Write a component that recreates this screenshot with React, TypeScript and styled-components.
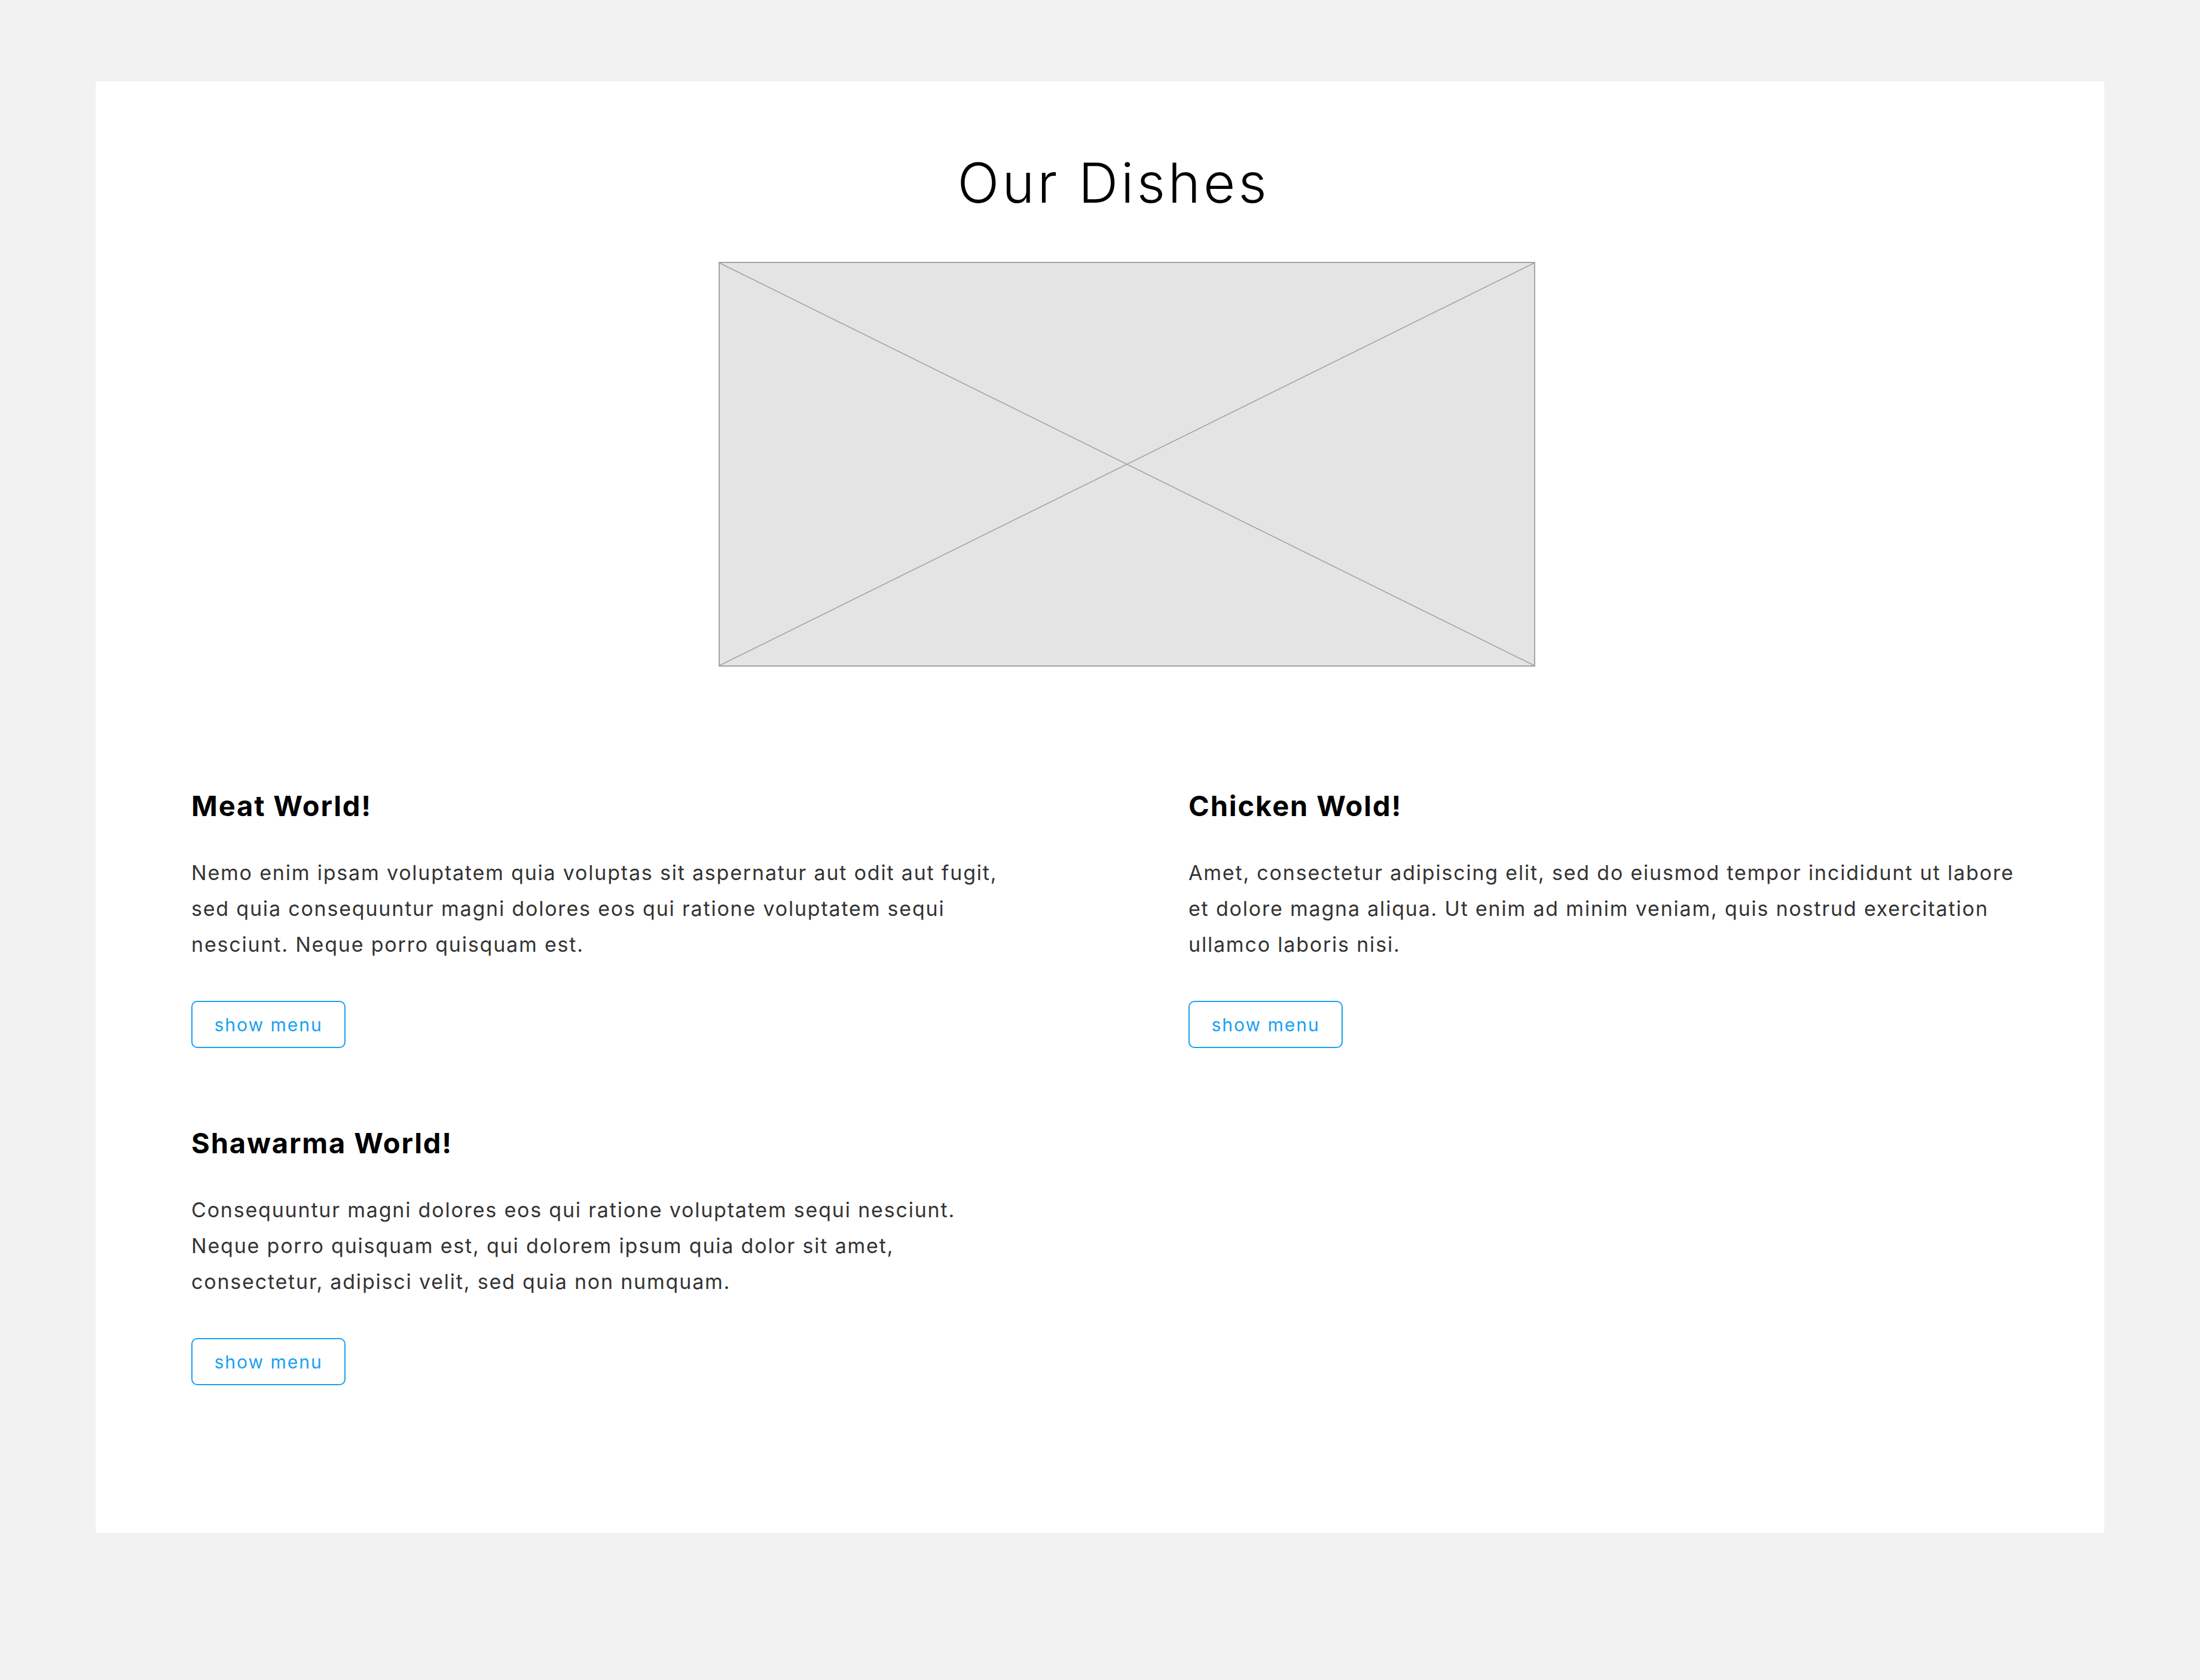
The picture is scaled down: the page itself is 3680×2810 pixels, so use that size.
import React from "react";
import styled, { createGlobalStyle } from "styled-components";

const GlobalStyle = createGlobalStyle`
  html, body {
    margin: 0;
    padding: 0;
    background: #f2f2f2;
  }
  body {
    font-family: "Inter", "Open Sans", sans-serif;
  }
`;

const Page = styled.div`
  width: 3680px;
  min-height: 2810px;
  padding: 136px 160px 242px;
  box-sizing: border-box;
  background: #f2f2f2;
`;

const Card = styled.section`
  width: 3360px;
  background: #ffffff;
  padding: 115px 160px 247px;
  box-sizing: border-box;
  display: flex;
  flex-direction: column;
`;

const Title = styled.h1`
  margin: 0;
  padding-left: 45px;
  font-family: "Inter", sans-serif;
  font-weight: 300;
  font-size: 92px;
  line-height: 110px;
  letter-spacing: 4.9px;
  color: #000;
  text-align: center;
`;

const Placeholder = styled.div`
  width: 1366px;
  height: 677px;
  margin: 77px 0 0 882px;
  box-sizing: border-box;
  border: 2px solid #a3a3a3;
  background: #e4e4e4;
  svg {
    display: block;
    width: 100%;
    height: 100%;
  }
`;

const Grid = styled.div`
  margin-top: 205px;
  display: grid;
  grid-template-columns: 1372px 1372px;
  column-gap: 296px;
  row-gap: 131px;
`;

const Dish = styled.article`
  display: flex;
  flex-direction: column;
  align-items: flex-start;
`;

const DishTitle = styled.h2`
  margin: 0;
  font-family: "Inter", sans-serif;
  font-weight: 700;
  font-size: 47px;
  line-height: 56px;
  letter-spacing: 1.9px;
  color: #000;
`;

const DishText = styled.p`
  margin: 54px 0 0;
  font-family: "Inter", sans-serif;
  font-weight: 400;
  font-size: 34px;
  line-height: 60px;
  letter-spacing: 1.8px;
  color: #333;
  white-space: nowrap;
`;

const MenuButton = styled.button`
  margin-top: 64px;
  width: 258px;
  height: 79px;
  box-sizing: border-box;
  border: 2px solid #1a9ff2;
  border-radius: 10px;
  background: #fff;
  color: #1a9ff2;
  font-family: "Inter", sans-serif;
  font-size: 30px;
  font-weight: 400;
  letter-spacing: 2px;
  padding: 0;
  cursor: pointer;
`;

const dishes = [
  {
    title: "Meat World!",
    lines: [
      "Nemo enim ipsam voluptatem quia voluptas sit aspernatur aut odit aut fugit,",
      "sed quia consequuntur magni dolores eos qui ratione voluptatem sequi",
      "nesciunt. Neque porro quisquam est.",
    ],
  },
  {
    title: "Chicken Wold!",
    lines: [
      "Amet, consectetur adipiscing elit, sed do eiusmod tempor incididunt ut labore",
      "et dolore magna aliqua. Ut enim ad minim veniam, quis nostrud exercitation",
      "ullamco laboris nisi.",
    ],
  },
  {
    title: "Shawarma World!",
    lines: [
      "Consequuntur magni dolores eos qui ratione voluptatem sequi nesciunt.",
      "Neque porro quisquam est, qui dolorem ipsum quia dolor sit amet,",
      "consectetur, adipisci velit, sed quia non numquam.",
    ],
  },
];

export default function App() {
  return (
    <>
      <GlobalStyle />
      <Page>
        <Card>
          <Title>Our Dishes</Title>
          <Placeholder>
            <svg viewBox="0 0 1362 673" preserveAspectRatio="none">
              <line x1="0" y1="0" x2="1362" y2="673" stroke="#a3a3a3" strokeWidth="1.6" />
              <line x1="1362" y1="0" x2="0" y2="673" stroke="#a3a3a3" strokeWidth="1.6" />
            </svg>
          </Placeholder>
          <Grid>
            {dishes.map((d) => (
              <Dish key={d.title}>
                <DishTitle>{d.title}</DishTitle>
                <DishText>
                  {d.lines.map((l, i) => (
                    <React.Fragment key={i}>
                      {l}
                      {i < d.lines.length - 1 && <br />}
                    </React.Fragment>
                  ))}
                </DishText>
                <MenuButton>show menu</MenuButton>
              </Dish>
            ))}
          </Grid>
        </Card>
      </Page>
    </>
  );
}
